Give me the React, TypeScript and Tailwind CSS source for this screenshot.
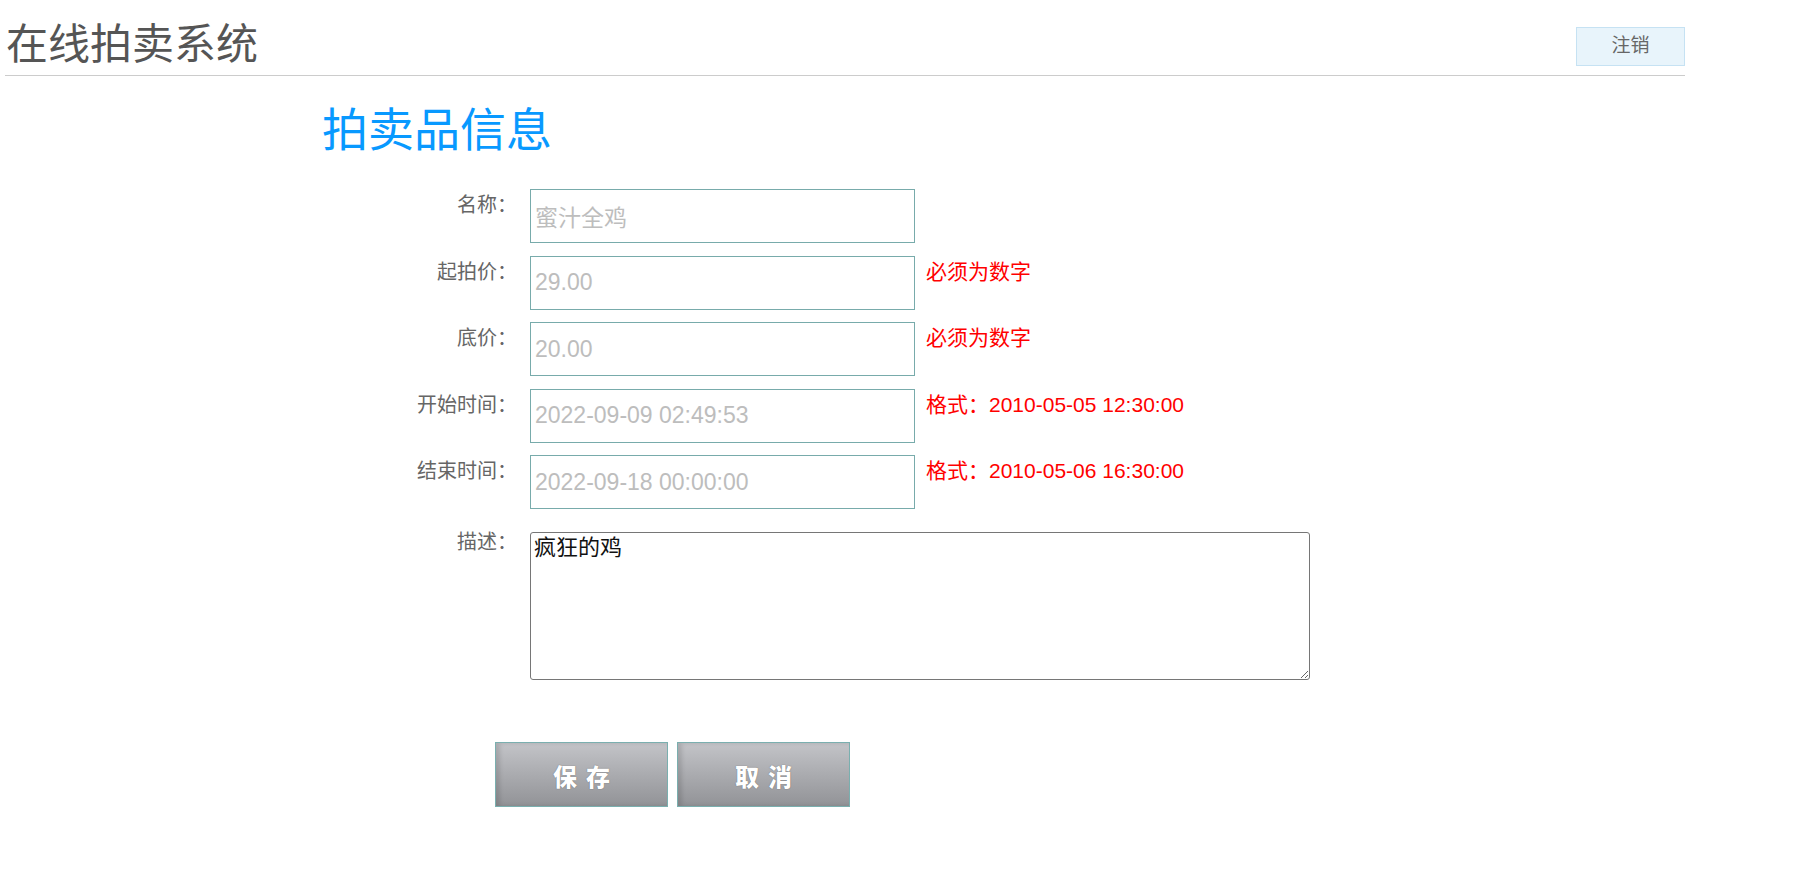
const rows = [
	{ label: '名称：', value: '蜜汁全鸡', tip: '' },
	{ label: '起拍价：', value: '29.00', tip: '必须为数字' },
	{ label: '底价：', value: '20.00', tip: '必须为数字' },
	{ label: '开始时间：', value: '2022-09-09 02:49:53', tip: '格式：2010-05-05 12:30:00' },
	{ label: '结束时间：', value: '2022-09-18 00:00:00', tip: '格式：2010-05-06 16:30:00' },
];

const FormButton = ({ text }: { text: string }) => {
	return (
		<button className="w-[173px] h-[65px] border border-[#7aafaf] bg-gradient-to-b from-[#c3c4c8] to-[#929397] shadow-[inset_4px_0_4px_rgba(0,0,0,0.12)] text-white font-black text-[24px] tracking-[9px] pl-[9px] pt-[6px] [text-shadow:0_0_1px_rgba(0,0,0,0.5)]">
			{text}
		</button>
	);
};

const App = () => {
	return (
		<div className="min-h-screen bg-white font-['Liberation_Sans','Noto_Sans_CJK_SC',sans-serif]">
			<div className="w-[1680px] ml-[5px] h-[76px] flex justify-between items-start border-b border-[#cccccc]">
				<h1 className="pt-[24px] pl-[1px] text-[42px] leading-none text-[#555555]">在线拍卖系统</h1>
				<button className="mt-[27px] w-[109px] h-[39px] border border-[#c6e2f3] bg-[#e8f4fb] text-[19px] text-[#666666]">注销</button>
			</div>

			<h2 className="mt-[31px] ml-[322px] text-[46px] leading-none text-[#0899ff]">拍卖品信息</h2>

			<div className="mt-[36px] pl-[357px] flex flex-col gap-[12.5px]">
				{rows.map((row) => (
					<div key={row.label} className="flex items-start">
						<div className="w-[160px] pt-[6px] text-right text-[20px] leading-none text-[#666666]">{row.label}</div>
						<input
							readOnly
							defaultValue={row.value}
							className="ml-[13px] w-[385px] h-[54px] border border-[#78abab] px-[4px] text-[23px] text-[#bdbdbd] outline-none"
						/>
						{row.tip && <div className="ml-[11px] pt-[5px] text-[21px] leading-none text-[#ff0000]">{row.tip}</div>}
					</div>
				))}
			</div>

			<div className="mt-[23px] pl-[357px] flex items-start">
				<div className="w-[160px] text-right text-[20px] leading-none text-[#666666]">描述：</div>
				<textarea
					readOnly
					defaultValue="疯狂的鸡"
					className="ml-[13px] w-[780px] h-[148px] border border-[#767676] rounded-[3px] px-[3px] py-[2px] text-[22px] leading-[26px] text-[#111111] outline-none"
				/>
			</div>

			<div className="mt-[62px] pl-[495px] flex gap-[9px]">
				<FormButton text="保存" />
				<FormButton text="取消" />
			</div>
		</div>
	);
};

export default App;
